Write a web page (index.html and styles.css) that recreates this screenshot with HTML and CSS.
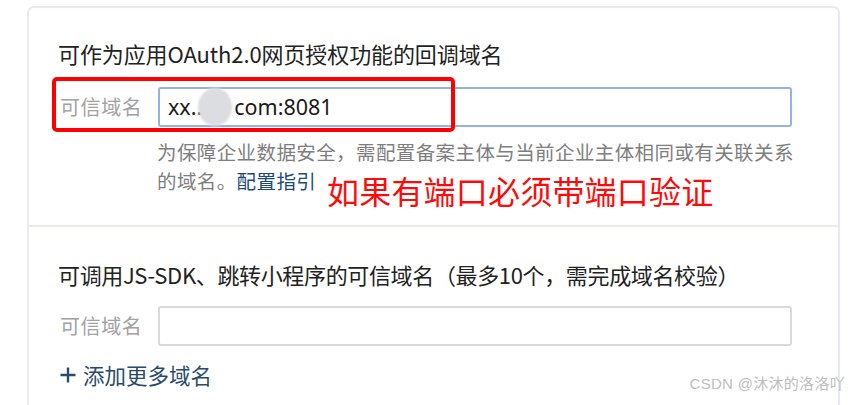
FILE: index.html
```html
<!DOCTYPE html>
<html lang="zh-CN">
<head>
<meta charset="utf-8">
<link rel="stylesheet" href="styles.css">
</head>
<body>
<div class="card">
  <section class="section first">
    <h3 class="title">可作为应用OAuth2.0网页授权功能的回调域名</h3>
    <div class="row">
      <span class="label">可信域名</span>
      <div class="input active">xx..<span class="blur"></span>com:8081</div>
    </div>
    <p class="help">为保障企业数据安全，需配置备案主体与当前企业主体相同或有关联关系<br>的域名。<a class="link">配置指引</a></p>
    <div class="mark-box"></div>
    <div class="note">如果有端口必须带端口验证</div>
  </section>
  <section class="section second">
    <h3 class="title">可调用JS-SDK、跳转小程序的可信域名（最多10个，需完成域名校验）</h3>
    <div class="row">
      <span class="label">可信域名</span>
      <div class="input"></div>
    </div>
    <div class="add"><svg class="plus" width="16" height="16" viewBox="0 0 16 16"><path d="M8 0.5V15.5M0.5 8H15.5" stroke="#2a4a6c" stroke-width="2.4" fill="none"/></svg>添加更多域名</div>
  </section>
</div>
<div class="watermark">CSDN @沐沐的洛洛吖</div>
</body>
</html>
```

FILE: styles.css
```css
html, body {
  margin: 0;
  padding: 0;
  background: #ffffff;
  overflow: hidden;
  height: 405px;
}
body {
  font-family: "Noto Sans CJK SC", "Noto Sans", sans-serif;
  position: relative;
}
.card {
  margin: 6px 0 0 27px;
  width: 813px;
  box-sizing: border-box;
  border: 2px solid #e9eaef;
  border-radius: 7px;
  height: 420px;
}
.section {
  position: relative;
  padding: 30px 46px 0 29px;
}
.section.first {
  height: 187px;
  border-bottom: 2px solid #eaebef;
}
.title {
  margin: 0 0 19px 0;
  font-size: 22px;
  font-weight: normal;
  line-height: 30px;
  color: #222222;
  letter-spacing: -0.1px;
  white-space: nowrap;
}
.second .title {
  margin-top: 2px;
  margin-bottom: 17px;
  letter-spacing: -0.35px;
}
.row {
  display: flex;
  align-items: center;
}
.label {
  width: 84px;
  margin: 0 14px 0 2px;
  font-size: 20px;
  line-height: 30px;
  color: #a2a2a2;
  letter-spacing: 0.6px;
}
.input {
  flex: 1;
  height: 40px;
  box-sizing: border-box;
  border: 2px solid #d9d9d9;
  border-radius: 3px;
  padding: 0 8px;
  font-family: "Noto Sans", "Open Sans", sans-serif;
  font-size: 21.5px;
  line-height: 36px;
  color: #1a1a1a;
  display: flex;
  align-items: center;
}
.input.active {
  border-color: #93b3e2;
}
.blur {
  display: inline-block;
  width: 34px;
  height: 38px;
  border-radius: 50%;
  background: #dcdde1;
  filter: blur(1px);
  margin: 0 2px 0 -4px;
}
.help {
  margin: 10px 0 0 99px;
  font-size: 19.5px;
  line-height: 29px;
  color: #7e7e7e;
  letter-spacing: 0.4px;
  white-space: nowrap;
}
.link {
  color: #1d4b78;
}
.mark-box {
  position: absolute;
  left: 23px;
  top: 69px;
  width: 403px;
  height: 55px;
  box-sizing: border-box;
  border: 4px solid #ff0000;
  border-radius: 5px;
}
.note {
  position: absolute;
  left: 298px;
  top: 163px;
  font-size: 32px;
  line-height: 38px;
  color: #ff0a0a;
  letter-spacing: 0.2px;
}
.add {
  margin: 14px 0 0 2px;
  font-size: 21.5px;
  line-height: 30px;
  color: #2a4a6c;
  display: flex;
  align-items: center;
}
.plus {
  margin-right: 7px;
}
.watermark {
  position: absolute;
  right: 6px;
  top: 374px;
  font-family: "Liberation Sans", "Noto Sans CJK SC", sans-serif;
  font-size: 15px;
  line-height: 20px;
  color: #bdbdbd;
  letter-spacing: 0.3px;
}
```
